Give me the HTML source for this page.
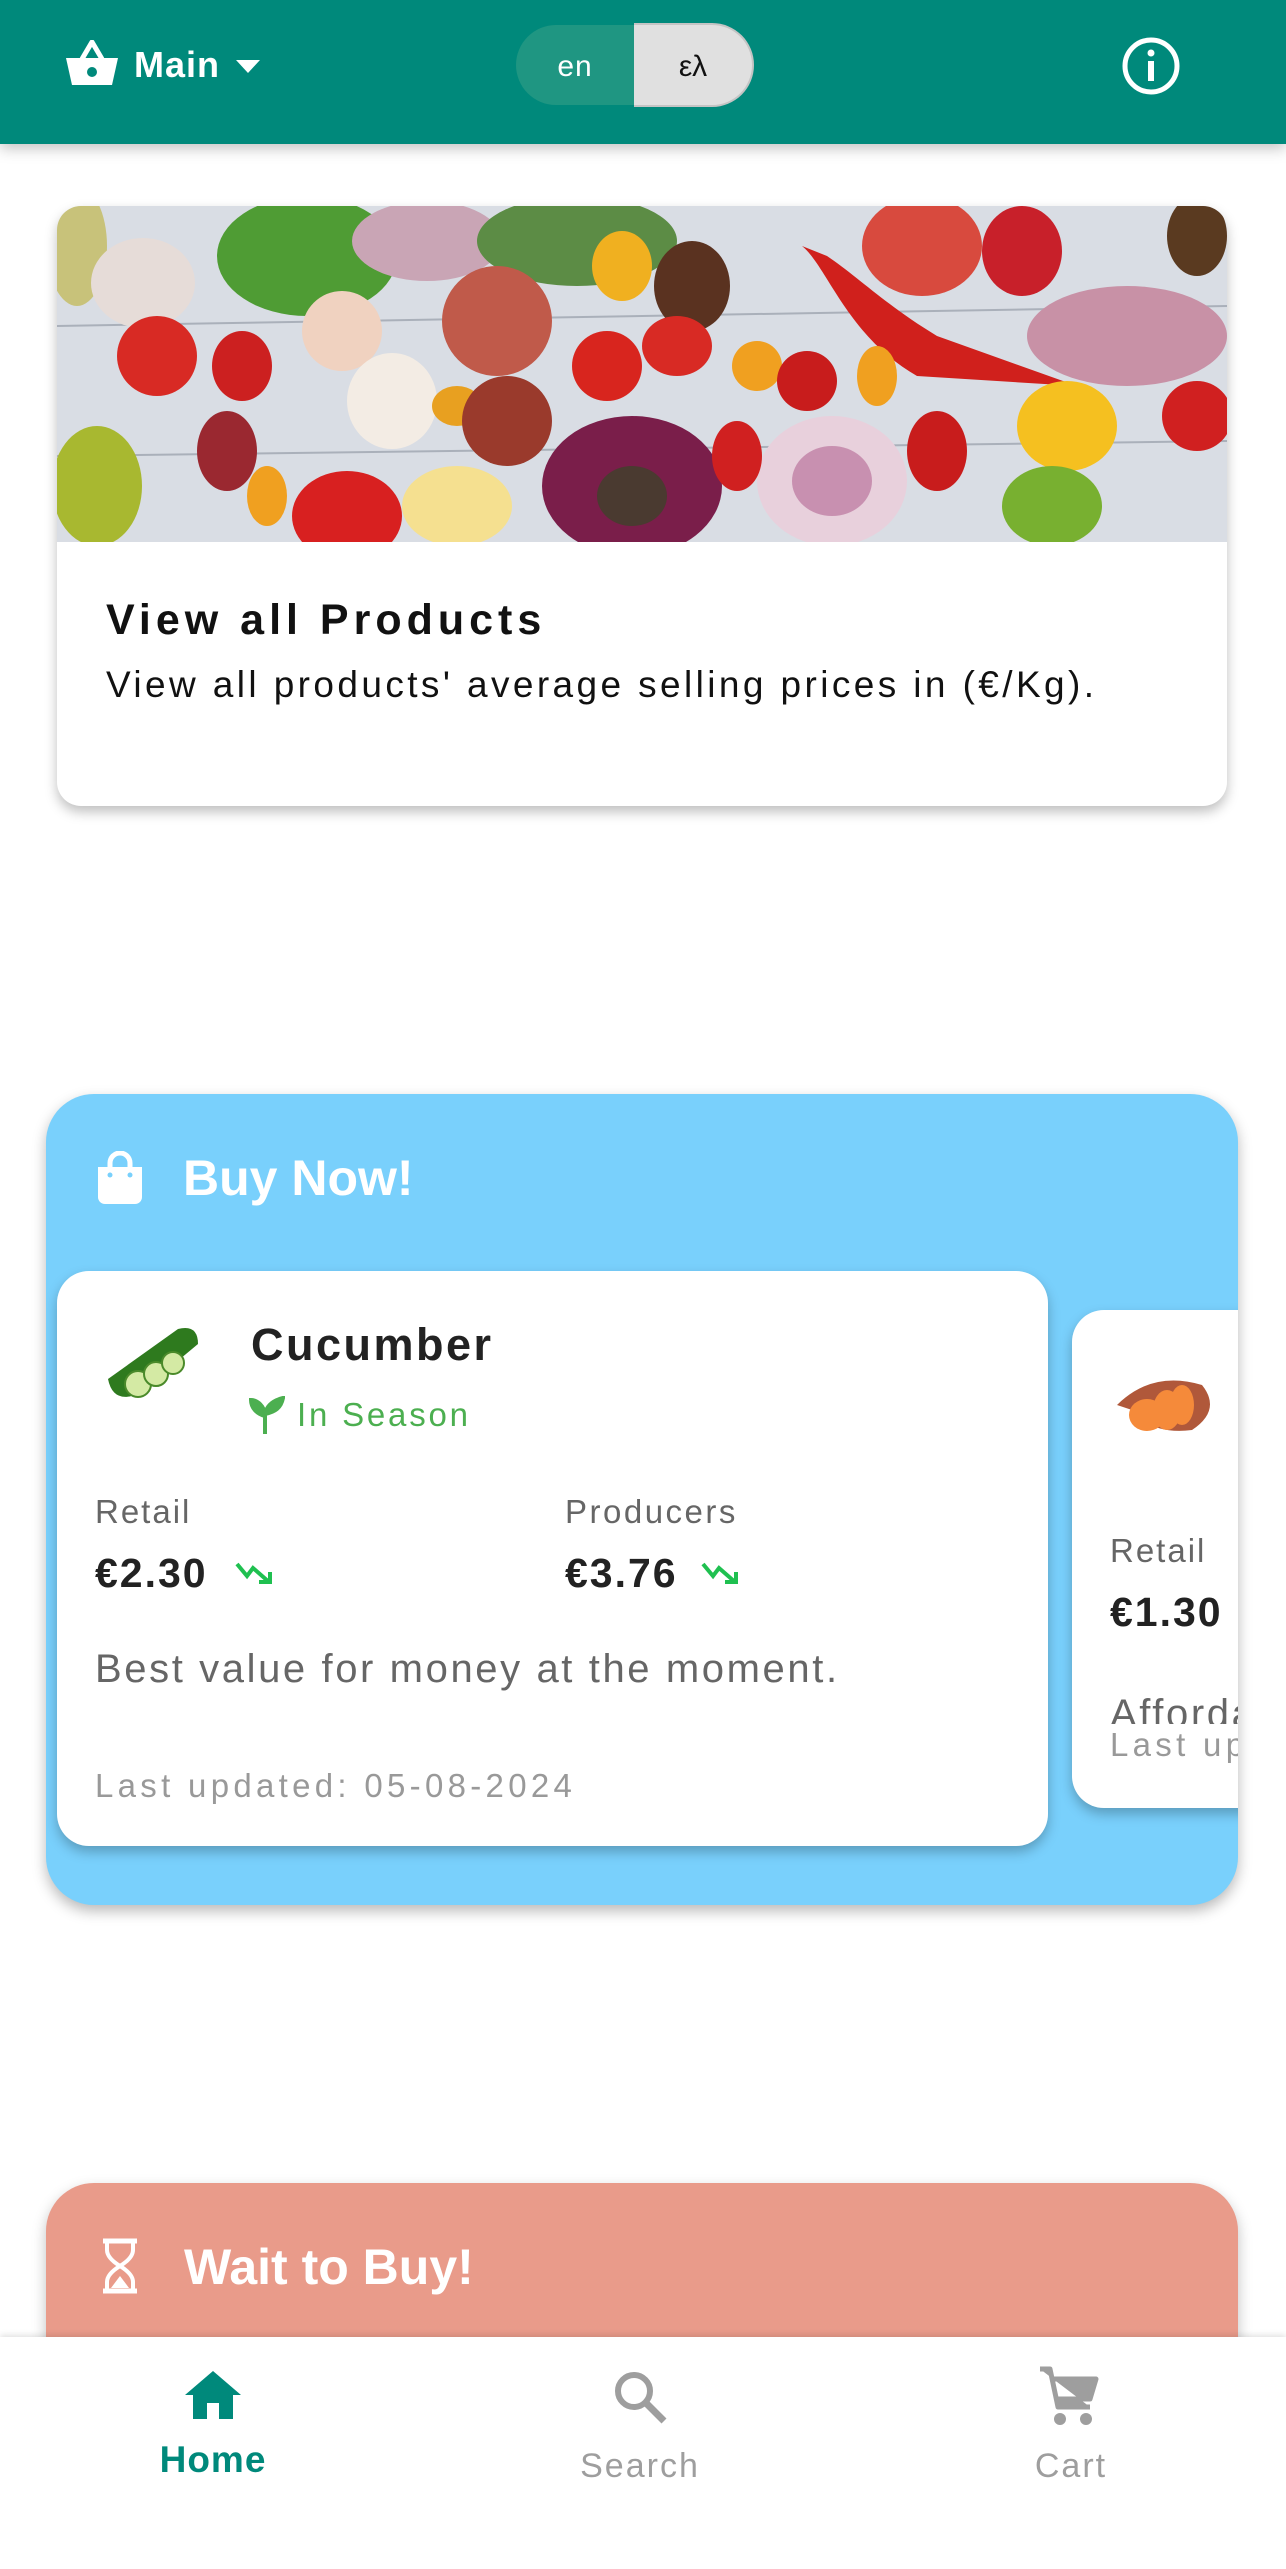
<!DOCTYPE html>
<html><head><meta charset="utf-8">
<style>
*{margin:0;padding:0;box-sizing:border-box}
body{width:1286px;height:2569px;background:#fff;font-family:"Liberation Sans",Arial,sans-serif;position:relative;overflow:hidden}
.abs{position:absolute}
.hdr{left:0;top:0;width:1286px;height:144px;background:#00897b;box-shadow:0 4px 14px rgba(0,0,0,.25);z-index:5}
.card{background:#fff;border-radius:24px;box-shadow:0 6px 12px rgba(0,0,0,.25)}
.t{white-space:nowrap}
</style></head><body>
<div class="abs hdr">
  <svg class="abs" style="left:64px;top:40px" width="56" height="47" viewBox="0 0 56 47">
    <path d="M18 19 L28 2 L38 19" fill="none" stroke="#fff" stroke-width="5" stroke-linejoin="round"/>
    <path d="M2 18 H54 L48 45 H8 Z" fill="#fff"/>
    <circle cx="28" cy="32" r="5" fill="#00897b"/>
  </svg>
  <div class="abs t" style="left:134px;top:44px;font-size:36px;font-weight:bold;color:#fff;letter-spacing:1px">Main</div>
  <svg class="abs" style="left:236px;top:60px" width="24" height="13"><path d="M0 0H24L12 13Z" fill="#fff"/></svg>
  <div class="abs" style="left:516px;top:25px;width:118px;height:80px;background:#1f9682;border-radius:40px 0 0 40px"></div>
  <div class="abs" style="left:634px;top:23px;width:120px;height:84px;background:#e0e0e0;border-radius:0 42px 42px 0;border:2px solid #c4c4c4;border-left:none"></div>
  <div class="abs t" style="left:516px;top:50px;width:118px;text-align:center;font-size:30px;color:#fff;letter-spacing:1px">en</div>
  <div class="abs t" style="left:634px;top:50px;width:118px;text-align:center;font-size:30px;color:#111">ελ</div>
  <svg class="abs" style="left:1121px;top:36px" width="60" height="60" viewBox="0 0 60 60">
    <circle cx="30" cy="30" r="26" fill="none" stroke="#fff" stroke-width="5"/>
    <rect x="27" y="25" width="6" height="20" fill="#fff"/><circle cx="30" cy="17" r="3.5" fill="#fff"/>
  </svg>
</div>

<div class="abs card" style="left:57px;top:206px;width:1170px;height:600px;overflow:hidden">
  <svg width="1170" height="336" viewBox="0 0 1170 336" style="display:block">
    <rect width="1170" height="336" fill="#d9dde4"/>
    <g stroke="#aab0ba" stroke-width="2"><line x1="0" y1="120" x2="1170" y2="100"/><line x1="0" y1="250" x2="1170" y2="235"/></g>
    <ellipse cx="20" cy="40" rx="30" ry="60" fill="#c8c27a"/>
    <ellipse cx="86" cy="77" rx="52" ry="45" fill="#e6dcd8"/>
    <ellipse cx="250" cy="50" rx="90" ry="60" fill="#4f9c34"/>
    <ellipse cx="370" cy="35" rx="75" ry="40" fill="#c9a5b5"/>
    <ellipse cx="520" cy="35" rx="100" ry="45" fill="#5c8c45"/>
    <ellipse cx="440" cy="115" rx="55" ry="55" fill="#c05a4a"/>
    <ellipse cx="635" cy="80" rx="38" ry="45" fill="#5a3220"/>
    <ellipse cx="565" cy="60" rx="30" ry="35" fill="#f0b020"/>
    <ellipse cx="865" cy="40" rx="60" ry="50" fill="#d84a3e"/>
    <ellipse cx="965" cy="45" rx="40" ry="45" fill="#c8202a"/>
    <ellipse cx="1140" cy="30" rx="30" ry="40" fill="#5a3a20"/>
    <path d="M745 40 C770 60 790 130 860 170 L1020 180 L880 130 C830 100 800 70 770 50Z" fill="#d0201c"/>
    <ellipse cx="1070" cy="130" rx="100" ry="50" fill="#c891a6"/>
    <ellipse cx="100" cy="150" rx="40" ry="40" fill="#d82a24"/>
    <ellipse cx="185" cy="160" rx="30" ry="35" fill="#cc2020"/>
    <ellipse cx="285" cy="125" rx="40" ry="40" fill="#f0d2c0"/>
    <ellipse cx="335" cy="195" rx="45" ry="48" fill="#f3ece4"/>
    <ellipse cx="400" cy="200" rx="25" ry="20" fill="#e8a020"/>
    <ellipse cx="450" cy="215" rx="45" ry="45" fill="#9a3a2c"/>
    <ellipse cx="550" cy="160" rx="35" ry="35" fill="#d8251e"/>
    <ellipse cx="620" cy="140" rx="35" ry="30" fill="#d82a24"/>
    <ellipse cx="700" cy="160" rx="25" ry="25" fill="#f0a020"/>
    <ellipse cx="750" cy="175" rx="30" ry="30" fill="#c81c1c"/>
    <ellipse cx="820" cy="170" rx="20" ry="30" fill="#f0a020"/>
    <ellipse cx="40" cy="280" rx="45" ry="60" fill="#a8b830"/>
    <ellipse cx="170" cy="245" rx="30" ry="40" fill="#9a2830"/>
    <ellipse cx="290" cy="310" rx="55" ry="45" fill="#d82020"/>
    <ellipse cx="400" cy="300" rx="55" ry="40" fill="#f5e090"/>
    <ellipse cx="575" cy="280" rx="90" ry="70" fill="#7a1e4a"/>
    <ellipse cx="575" cy="290" rx="35" ry="30" fill="#4a3a30"/>
    <ellipse cx="775" cy="275" rx="75" ry="65" fill="#e8d0dc"/>
    <ellipse cx="775" cy="275" rx="40" ry="35" fill="#c890b0"/>
    <ellipse cx="880" cy="245" rx="30" ry="40" fill="#c81c1c"/>
    <ellipse cx="1010" cy="220" rx="50" ry="45" fill="#f5c020"/>
    <ellipse cx="995" cy="300" rx="50" ry="40" fill="#78b030"/>
    <ellipse cx="1140" cy="210" rx="35" ry="35" fill="#d02020"/>
    <ellipse cx="680" cy="250" rx="25" ry="35" fill="#d02020"/>
    <ellipse cx="210" cy="290" rx="20" ry="30" fill="#f0a020"/>
  </svg>
  <div class="abs t" style="left:49px;top:390px;font-size:43px;font-weight:bold;color:#111;letter-spacing:5px">View all Products</div>
  <div class="abs t" style="left:49px;top:458px;font-size:37px;color:#111;letter-spacing:3.4px">View all products' average selling prices in (€/Kg).</div>
</div>

<div class="abs" style="left:46px;top:1094px;width:1192px;height:811px;background:#79d0fc;border-radius:48px;box-shadow:0 6px 14px rgba(0,0,0,.28);overflow:hidden">
  <svg class="abs" style="left:50px;top:57px" width="48" height="54" viewBox="0 0 48 54">
    <path d="M14 18 V12 a10 10 0 0 1 20 0 V18" fill="none" stroke="#fff" stroke-width="5"/>
    <path d="M2 16 H46 V46 a7 7 0 0 1 -7 7 H9 a7 7 0 0 1 -7 -7Z" fill="#fff"/>
    <circle cx="14" cy="24" r="2.5" fill="#79d0fc"/><circle cx="34" cy="24" r="2.5" fill="#79d0fc"/>
  </svg>
  <div class="abs t" style="left:137px;top:55px;font-size:50px;font-weight:bold;color:#fff">Buy Now!</div>
  <div class="abs card" style="left:11px;top:177px;width:991px;height:575px;border-radius:32px">
    <svg class="abs" style="left:41px;top:48px" width="112" height="90" viewBox="0 0 112 90">
      <path d="M10 60 L80 10 Q100 5 100 25 L40 75 Q15 85 10 60Z" fill="#2e7a1e"/>
      <circle cx="40" cy="65" r="13" fill="#d4eaa4" stroke="#4a8a2a" stroke-width="2"/>
      <circle cx="58" cy="55" r="12" fill="#d4eaa4" stroke="#4a8a2a" stroke-width="2"/>
      <circle cx="75" cy="44" r="11" fill="#d4eaa4" stroke="#4a8a2a" stroke-width="2"/>
    </svg>
    <div class="abs t" style="left:194px;top:48px;font-size:45px;font-weight:bold;color:#222;letter-spacing:2.5px">Cucumber</div>
    <svg class="abs" style="left:192px;top:125px" width="36" height="40" viewBox="0 0 36 40"><path d="M16 38 V20 C16 10 8 4 2 4 C2 12 8 18 16 20 M16 18 C18 8 26 4 34 2 C32 12 26 16 16 18" fill="#4caf50" stroke="#4caf50" stroke-width="4"/></svg>
    <div class="abs t" style="left:240px;top:125px;font-size:33px;color:#4caf50;letter-spacing:2.8px">In Season</div>
    <div class="abs t" style="left:38px;top:222px;font-size:33px;color:#666;letter-spacing:2px">Retail</div>
    <div class="abs t" style="left:38px;top:279px;font-size:41px;font-weight:bold;color:#222;letter-spacing:2px">€2.30</div>
    <svg class="abs" style="left:178px;top:289px" width="40" height="26" viewBox="0 0 40 26"><path d="M2 4 L12 16 L18 8 L34 22 M24 22 H35 V12" fill="none" stroke="#1fc050" stroke-width="4"/></svg>
    <div class="abs t" style="left:508px;top:222px;font-size:33px;color:#666;letter-spacing:2.5px">Producers</div>
    <div class="abs t" style="left:508px;top:279px;font-size:41px;font-weight:bold;color:#222;letter-spacing:2px">€3.76</div>
    <svg class="abs" style="left:644px;top:289px" width="40" height="26" viewBox="0 0 40 26"><path d="M2 4 L12 16 L18 8 L34 22 M24 22 H35 V12" fill="none" stroke="#1fc050" stroke-width="4"/></svg>
    <div class="abs t" style="left:38px;top:376px;font-size:40px;color:#666;letter-spacing:2.6px">Best value for money at the moment.</div>
    <div class="abs t" style="left:38px;top:496px;font-size:33px;color:#999;letter-spacing:4.3px">Last updated: 05-08-2024</div>
  </div>
  <div class="abs card" style="left:1026px;top:216px;width:300px;height:498px;border-radius:32px">
    <svg class="abs" style="left:40px;top:60px" width="110" height="70" viewBox="0 0 110 70">
      <path d="M5 35 Q40 0 90 15 Q110 40 80 60 Q40 65 20 40Z" fill="#b0583a"/>
      <ellipse cx="35" cy="45" rx="18" ry="16" fill="#f58a3a"/><ellipse cx="55" cy="40" rx="14" ry="20" fill="#f58a3a"/><ellipse cx="70" cy="35" rx="12" ry="20" fill="#f58a3a"/>
    </svg>
    <div class="abs t" style="left:38px;top:222px;font-size:33px;color:#666;letter-spacing:2px">Retail</div>
    <div class="abs t" style="left:38px;top:279px;font-size:41px;font-weight:bold;color:#222;letter-spacing:2px">€1.30</div>
    <div class="abs" style="left:38px;top:382px;width:200px;height:32px;overflow:hidden"><div class="t" style="font-size:40px;color:#666;letter-spacing:2.6px">Affordable</div></div>
    <div class="abs t" style="left:38px;top:416px;font-size:33px;color:#999;letter-spacing:4.3px">Last updated</div>
  </div>
</div>

<div class="abs" style="left:46px;top:2183px;width:1192px;height:300px;background:#e99b8a;border-radius:48px;box-shadow:0 6px 14px rgba(0,0,0,.25)">
  <svg class="abs" style="left:55px;top:55px" width="38" height="56" viewBox="0 0 38 56">
    <path d="M2 3 H36 M2 53 H36" stroke="#fff" stroke-width="5"/>
    <path d="M6 3 V12 Q6 20 19 28 Q32 20 32 12 V3 M6 53 V44 Q6 36 19 28 Q32 36 32 44 V53" fill="none" stroke="#fff" stroke-width="4"/>
    <path d="M10 50 L19 38 L28 50Z" fill="#fff"/>
  </svg>
  <div class="abs t" style="left:138px;top:55px;font-size:50px;font-weight:bold;color:#fff">Wait to Buy!</div>
</div>

<div class="abs" style="left:0;top:2337px;width:1286px;height:232px;background:#fff;box-shadow:0 -2px 6px rgba(0,0,0,.12)">
  <svg class="abs" style="left:183px;top:32px" width="60" height="52" viewBox="0 0 60 52"><path d="M30 2 L58 26 H50 V50 H36 V34 H24 V50 H10 V26 H2Z" fill="#00897b"/></svg>
  <div class="abs t" style="left:113px;top:102px;width:200px;text-align:center;font-size:37px;font-weight:bold;color:#00897b;letter-spacing:1px">Home</div>
  <svg class="abs" style="left:612px;top:32px" width="56" height="56" viewBox="0 0 56 56"><circle cx="22" cy="22" r="16" fill="none" stroke="#9e9e9e" stroke-width="6"/><path d="M33 33 L52 52" stroke="#9e9e9e" stroke-width="7"/></svg>
  <div class="abs t" style="left:540px;top:110px;width:200px;text-align:center;font-size:34px;color:#9e9e9e;letter-spacing:2px">Search</div>
  <svg class="abs" style="left:1036px;top:28px" width="64" height="64" viewBox="0 0 64 64"><path d="M4 4 H14 L22 42 H54 M14 14 H60 L54 34 H20" fill="#9e9e9e" stroke="#9e9e9e" stroke-width="5" stroke-linejoin="round"/><circle cx="24" cy="54" r="6" fill="#9e9e9e"/><circle cx="50" cy="54" r="6" fill="#9e9e9e"/></svg>
  <div class="abs t" style="left:971px;top:110px;width:200px;text-align:center;font-size:34px;color:#9e9e9e;letter-spacing:2px">Cart</div>
</div>
</body></html>
